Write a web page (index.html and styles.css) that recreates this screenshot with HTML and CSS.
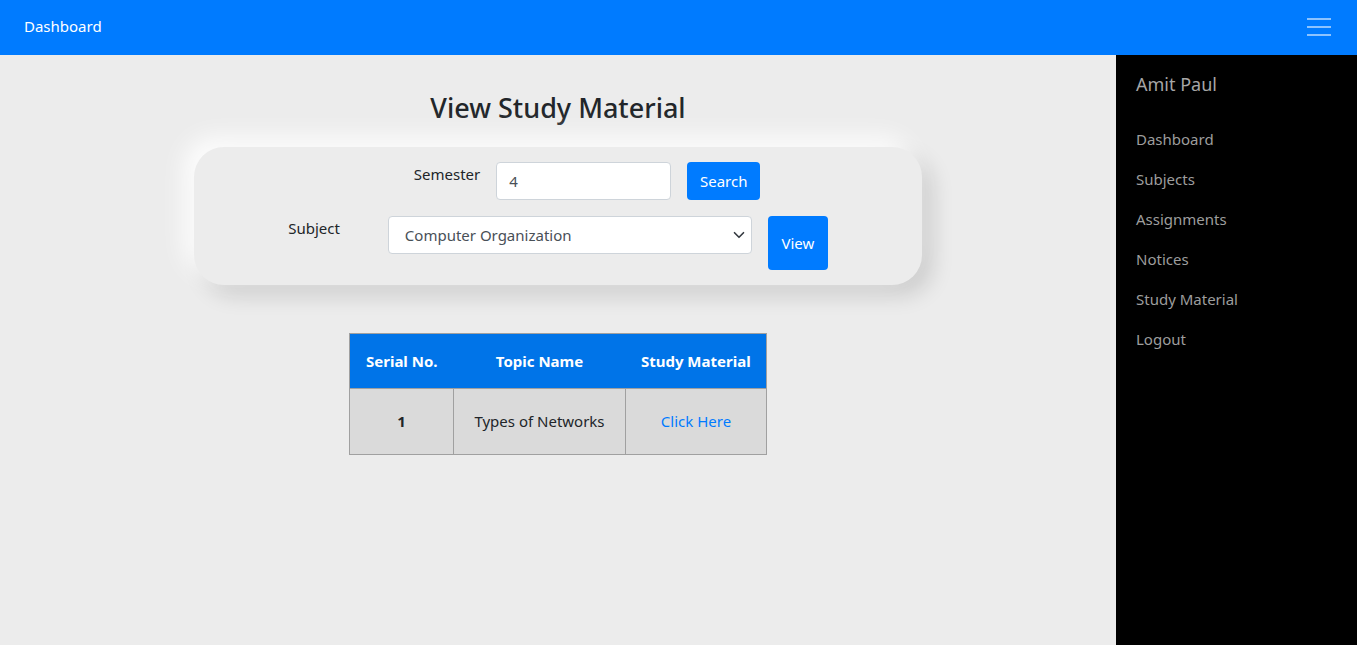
FILE: index.html
```html
<!DOCTYPE html>
<html lang="en">
<head>
<meta charset="utf-8">
<title>View Study Material</title>
<link rel="stylesheet" href="styles.css">
</head>
<body>
<header class="navbar">
  <a class="brand" href="#">Dashboard</a>
  <button class="toggler" aria-label="Menu">
    <svg width="24" height="20" viewBox="0 0 24 20">
      <rect x="0" y="1" width="24" height="2" fill="rgba(255,255,255,0.55)"/>
      <rect x="0" y="9" width="24" height="2" fill="rgba(255,255,255,0.55)"/>
      <rect x="0" y="17" width="24" height="2" fill="rgba(255,255,255,0.55)"/>
    </svg>
  </button>
</header>
<div class="layout">
  <main class="main">
    <h2 class="title">View Study Material</h2>
    <section class="card">
      <div class="form-row row-semester">
        <label class="label">Semester</label>
        <input class="input" type="text" value="4">
        <button class="btn btn-search">Search</button>
      </div>
      <div class="form-row row-subject">
        <label class="label label-subject">Subject</label>
        <span class="select-wrap">
          <select class="select">
            <option>Computer Organization</option>
          </select>
          <svg class="chevron" width="12" height="12" viewBox="0 0 16 16"><path d="M2 5l6 6 6-6" fill="none" stroke="#343a40" stroke-width="2.2" stroke-linecap="round" stroke-linejoin="round"/></svg>
        </span>
        <button class="btn btn-view">View</button>
      </div>
    </section>
    <table class="table">
      <thead>
        <tr><th class="c1">Serial No.</th><th class="c2">Topic Name</th><th class="c3">Study Material</th></tr>
      </thead>
      <tbody>
        <tr><td class="bold">1</td><td>Types of Networks</td><td><a class="link" href="#">Click Here</a></td></tr>
      </tbody>
    </table>
  </main>
  <aside class="sidebar">
    <div class="user">Amit Paul</div>
    <nav class="side-nav">
      <a href="#">Dashboard</a>
      <a href="#">Subjects</a>
      <a href="#">Assignments</a>
      <a href="#">Notices</a>
      <a href="#">Study Material</a>
      <a href="#">Logout</a>
    </nav>
  </aside>
</div>
</body>
</html>
```
FILE: styles.css
```css
* { box-sizing: border-box; }
html, body { margin: 0; height: 100%; }
body {
  font-family: "Noto Sans", "Open Sans", sans-serif;
  font-size: 16px;
  color: #212529;
  background: #ececec;
  overflow: hidden;
}
.navbar {
  height: 55px;
  background: #007bff;
  display: flex;
  align-items: center;
  justify-content: space-between;
  padding: 0 26px 0 24px;
}
.brand { color: #fff; text-decoration: none; font-size: 15px; padding-bottom: 4px; }
.toggler { background: none; border: 0; padding: 0 0 2px; display: flex; }
.layout { display: flex; height: calc(100% - 55px); }
.main { flex: 1; display: flex; flex-direction: column; align-items: center; }
.title {
  margin: 36px 0 22px;
  font-size: 27px;
  font-weight: 500;
  line-height: 34px;
}
.card {
  width: 728px;
  height: 138px;
  border-radius: 30px;
  background: #ececec;
  box-shadow: -10px -10px 24px rgba(255,255,255,0.9), 10px 10px 22px rgba(0,0,0,0.14);
  padding: 15px 0;
  display: flex;
  flex-direction: column;
  gap: 16px;
}
.form-row { display: flex; justify-content: center; align-items: flex-start; }
.row-semester { padding-left: 58px; }
.label { line-height: 24px; font-size: 15px; margin-right: 16px; }
.label-subject { margin-right: 48px; }
.input {
  width: 175px; height: 38px;
  border: 1px solid #ced4da; border-radius: 4px;
  padding: 6px 12px;
  font: inherit; font-size: 15px; color: #495057; background: #fff;
  margin-right: 16px;
}
.btn {
  background: #007bff; color: #fff; border: 0; border-radius: 4px;
  font: inherit; font-size: 15px; cursor: pointer;
}
.btn-search { width: 73px; height: 38px; }
.btn-view { width: 60px; height: 54px; }
.select-wrap { position: relative; display: inline-block; margin-right: 16px; }
.select {
  -webkit-appearance: none; appearance: none;
  width: 364px; height: 38px;
  border: 1px solid #ced4da; border-radius: 4px;
  padding: 6px 16px;
  font: inherit; font-size: 15px; color: #495057; background: #fff;
}
.chevron { position: absolute; right: 7px; top: 13px; }
.table {
  margin-top: 48px;
  border-collapse: collapse;
  border: 1px solid #a0a0a0;
  font-size: 15px;
}
.table th {
  background: #0074e8;
  color: #fff;
  height: 55px;
  font-weight: 700;
  padding: 0;
}
.c1 { width: 104px; }
.c2 { width: 172px; }
.c3 { width: 141px; }
.table td {
  background: #dadada;
  height: 66px;
  text-align: center;
  border: 1px solid #a0a0a0;
  padding: 0 0 2px;
}
.bold { font-weight: 700; }
.link { color: #007bff; text-decoration: none; }
.sidebar {
  width: 241px;
  background: #000;
  padding: 17px 20px;
}
.user { color: #a6a6a6; font-size: 18px; line-height: 24px; margin-bottom: 23px; }
.side-nav { display: flex; flex-direction: column; }
.side-nav a { color: #9d9d9d; text-decoration: none; font-size: 15px; line-height: 40px; }
```
